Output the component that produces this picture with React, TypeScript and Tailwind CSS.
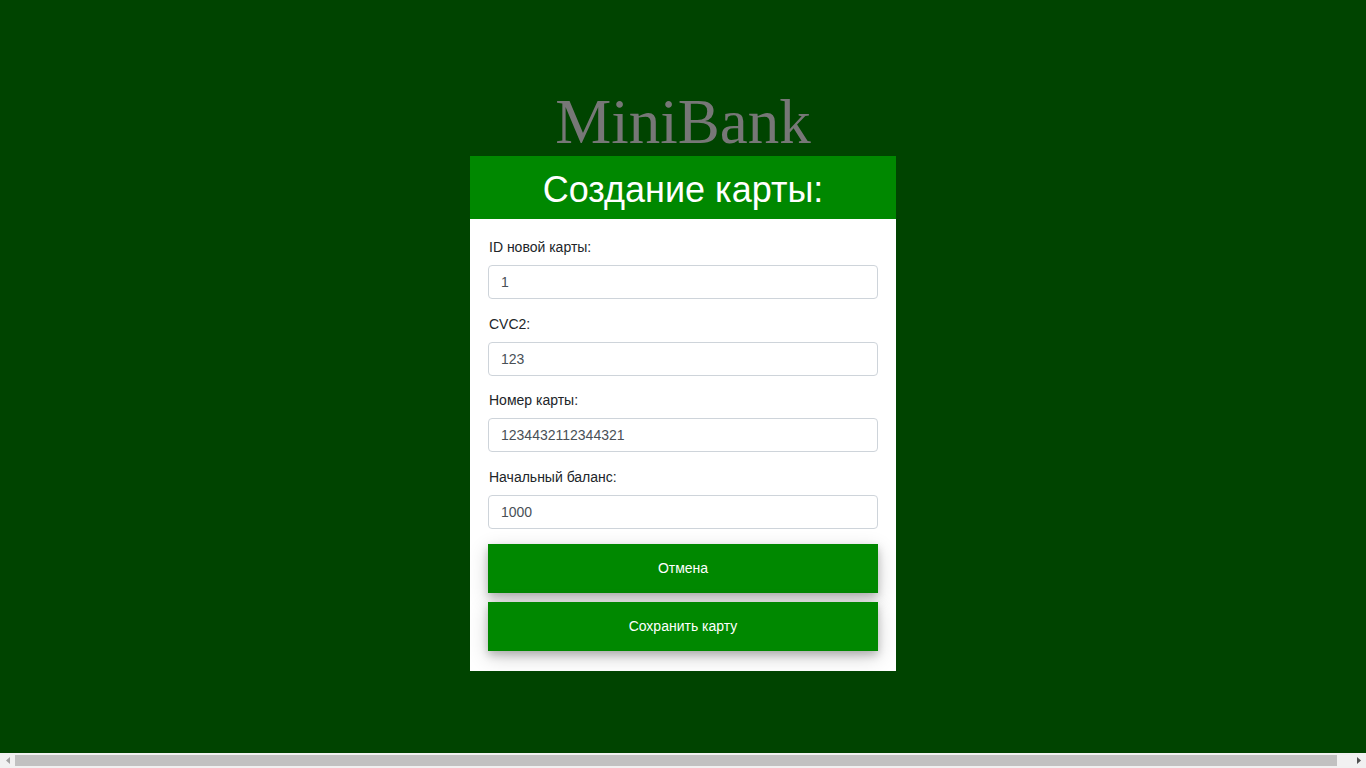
import React from "react";

function Field({ label, value }: { label: string; value: string }) {
  return (
    <div className="mb-[14.7px]">
      <div className="h-5 leading-5 mb-2 text-[14px] text-[#212529] pl-px">{label}</div>
      <input
        readOnly
        value={value}
        className="block w-full h-[34px] px-3 text-[14px] text-[#495057] bg-white border border-[#ced4da] rounded-[4px] outline-none"
        style={{ fontFamily: '"Liberation Sans", Arial, sans-serif' }}
      />
    </div>
  );
}

export default function App() {
  return (
    <div className="h-screen flex flex-col font-['Liberation_Sans',Arial,sans-serif]">
      <div className="flex-1 bg-[#004400] flex flex-col items-center pt-[88px] overflow-hidden">
        <h1 className="font-['Liberation_Serif','Times_New_Roman',serif] text-[63px] leading-[68px] text-[#777]">
          MiniBank
        </h1>
        <div className="w-[426px] bg-white">
          <div className="h-[63px] bg-[#008800] flex items-center justify-center text-white text-[36px] leading-none pt-[4px]">
            Создание карты:
          </div>
          <div className="px-[18px] pt-[18px] pb-5">
            <Field label="ID новой карты:" value="1" />
            <Field label="CVC2:" value="123" />
            <Field label="Номер карты:" value="1234432112344321" />
            <Field label="Начальный баланс:" value="1000" />
            <div className="flex flex-col gap-[9px]">
              <button className="h-[49px] w-full bg-[#008800] text-white text-[14px] shadow-[0_4px_8px_0_rgba(0,0,0,0.2),0_6px_20px_0_rgba(0,0,0,0.19)]">
                Отмена
              </button>
              <button className="h-[49px] w-full bg-[#008800] text-white text-[14px] shadow-[0_4px_8px_0_rgba(0,0,0,0.2),0_6px_20px_0_rgba(0,0,0,0.19)]">
                Сохранить карту
              </button>
            </div>
          </div>
        </div>
      </div>
      <div className="h-[15px] bg-[#f1f1f1] flex items-stretch shrink-0">
        <div className="w-[15px] flex items-center justify-center">
          <svg width="4" height="7" viewBox="0 0 4 7">
            <path d="M4 0 L0 3.5 L4 7 Z" fill="#a3a3a3" />
          </svg>
        </div>
        <div className="flex-1 flex items-center">
          <div className="w-[1322px] h-[11px] bg-[#c1c1c1]" />
        </div>
        <div className="w-[15px] flex items-center justify-center">
          <svg width="4" height="7" viewBox="0 0 4 7">
            <path d="M0 0 L4 3.5 L0 7 Z" fill="#505050" />
          </svg>
        </div>
      </div>
    </div>
  );
}
